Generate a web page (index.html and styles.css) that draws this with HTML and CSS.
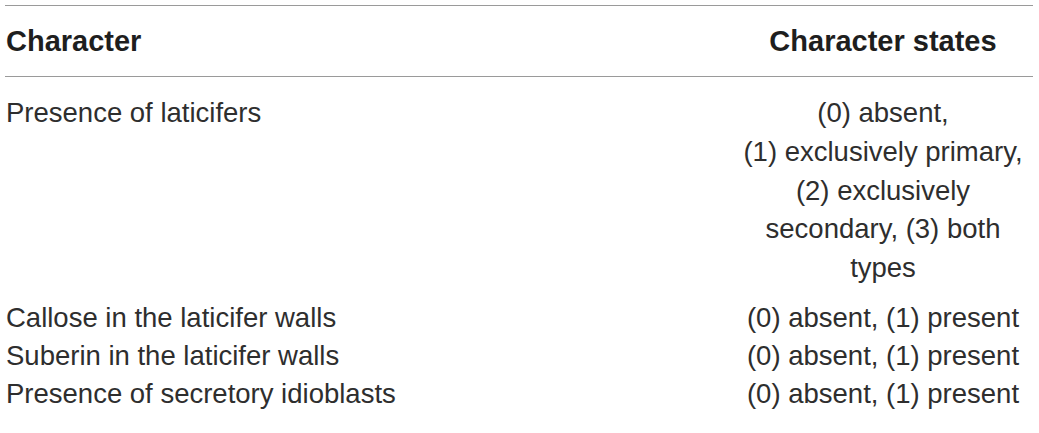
FILE: index.html
```html
<!DOCTYPE html>
<html lang="en">
<head>
<meta charset="utf-8">
<title>Character table</title>
<link rel="stylesheet" href="styles.css">
</head>
<body>
<table class="chars">
  <colgroup>
    <col class="col-name">
    <col class="col-states">
  </colgroup>
  <thead>
    <tr>
      <th class="name">Character</th>
      <th class="states">Character states</th>
    </tr>
  </thead>
  <tbody>
    <tr class="first">
      <td class="name">Presence of laticifers</td>
      <td class="states multi">(0) absent,<br>(1) exclusively primary,<br>(2) exclusively secondary, (3) both types</td>
    </tr>
    <tr>
      <td class="name">Callose in the laticifer walls</td>
      <td class="states">(0) absent, (1) present</td>
    </tr>
    <tr>
      <td class="name">Suberin in the laticifer walls</td>
      <td class="states">(0) absent, (1) present</td>
    </tr>
    <tr>
      <td class="name">Presence of secretory idioblasts</td>
      <td class="states">(0) absent, (1) present</td>
    </tr>
  </tbody>
</table>
</body>
</html>
```

FILE: styles.css
```css
html, body {
  margin: 0;
  padding: 0;
  background: #ffffff;
}

body {
  font-family: "Liberation Sans", Arial, Helvetica, sans-serif;
  font-size: 27.5px;
  color: #2e2e2e;
}

.chars {
  margin: 5px 0 0 5px;
  width: 1028px;
  border-collapse: collapse;
  table-layout: fixed;
}

.col-name { width: 733px; }
.col-states { width: 295px; }

.chars th,
.chars td {
  padding: 0;
  line-height: 38px;
  vertical-align: top;
}

.chars th {
  font-size: 29px;
  font-weight: bold;
  color: #1e1e1e;
  padding-top: 16px;
  padding-bottom: 16px;
  border-top: 1px solid #9a9a9a;
  border-bottom: 1px solid #9a9a9a;
}

.chars .name {
  text-align: left;
  padding-left: 1px;
}

.chars .states {
  text-align: center;
  padding-right: 5px;
}

.chars .first td {
  padding-top: 17px;
  padding-bottom: 11px;
}

.chars .multi {
  line-height: 38.75px;
}
```
